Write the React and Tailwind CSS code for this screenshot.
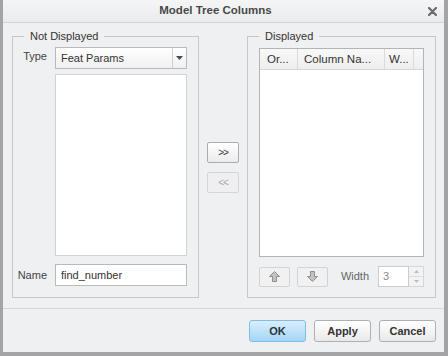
import React from "react";

const font = "font-['Liberation_Sans',Arial,sans-serif]";

function Group({ title, className, children }) {
  return (
    <div className={`relative border border-[#c6c7ca] ${className}`}>
      <span className="absolute -top-[8px] left-[11px] bg-[#eff0f2] px-[6px] text-[11px] leading-[14px] text-[#333]">
        {title}
      </span>
      {children}
    </div>
  );
}

function MoveArrow({ up }) {
  const pts = up
    ? "5.5,0.5 10.5,5.5 7.5,5.5 7.5,10.5 3.5,10.5 3.5,5.5 0.5,5.5"
    : "3.5,0.5 7.5,0.5 7.5,5.5 10.5,5.5 5.5,10.5 0.5,5.5 3.5,5.5";
  return (
    <svg width="11" height="11" viewBox="0 0 11 11">
      <polygon points={pts} fill="#c2c2c2" stroke="#8e8e8e" strokeWidth="1" strokeLinejoin="round" />
    </svg>
  );
}

export default function App() {
  return (
    <div className={`${font} w-[448px] h-[356px] bg-[#eff0f2] border-l-[3px] border-r-[4px] border-b-[4px] border-[#a4a4a6] flex flex-col`}>
      {/* title bar */}
      <div className="h-[23px] flex items-center border-b border-[#d3d4d7] bg-gradient-to-b from-[#f5f5f6] to-[#eaebed]">
        <div className="flex-1 text-center text-[11.5px] font-bold text-[#484848]">Model Tree Columns</div>
        <svg width="9" height="9" viewBox="0 0 9 9" className="mr-[7px]">
          <path d="M1 1 L8 8 M8 1 L1 8" stroke="#6b6b6b" strokeWidth="2.2" strokeLinecap="round" />
        </svg>
      </div>

      {/* body */}
      <div className="h-[285px] flex pl-[9px] pt-[13px]">
        <Group title="Not Displayed" className="w-[187px] h-[262px] pt-[10px]">
          <div className="flex items-start">
            <span className="w-[34px] mt-[2px] text-right text-[11px] leading-[14px] text-[#444]">Type</span>
            <div className="ml-[8px] w-[132px] h-[22px] flex border border-[#b9babd] bg-gradient-to-b from-[#ffffff] to-[#f0f0f1]">
              <span className="flex-1 pl-[5px] text-[11px] leading-[20px] text-[#333]">Feat Params</span>
              <div className="w-[14px] border-l border-[#cfd0d2] flex items-center justify-center">
                <svg width="7" height="4" viewBox="0 0 7 4">
                  <path d="M0 0 H7 L3.5 4 Z" fill="#4a4a4a" />
                </svg>
              </div>
            </div>
          </div>
          <div className="ml-[42px] mt-[5px] w-[132px] h-[182px] bg-white border border-[#d2d3d6]" />
          <div className="mt-[8px] flex items-center">
            <span className="w-[34px] text-right text-[11px] leading-[14px] text-[#444]">Name</span>
            <div className="ml-[8px] w-[132px] h-[22px] bg-white border border-[#b9babd] pl-[5px] text-[11px] leading-[20px] text-[#333]">
              find_number
            </div>
          </div>
        </Group>

        <div className="w-[48px] h-[262px] flex flex-col items-center justify-center gap-[9px]">
          <button className="w-[32px] h-[21px] rounded-[2px] border border-[#acadb0] bg-gradient-to-b from-[#ffffff] to-[#ebebec] text-[10px] leading-[19px] text-[#333] tracking-[-1px]">
            &gt;&gt;
          </button>
          <button className="w-[32px] h-[21px] rounded-[2px] border border-[#d4d5d7] bg-[#efeff1] text-[10px] leading-[19px] text-[#a8a8a8] tracking-[-1px]">
            &lt;&lt;
          </button>
        </div>

        <Group title="Displayed" className="w-[189px] h-[262px] pt-[11px] pl-[11px]">
          <div className="w-[165px] h-[209px] bg-white border border-[#b3b4b7]">
            <div className="h-[21px] flex border-b border-[#d5d6d8] bg-gradient-to-b from-[#f8f8f8] to-[#eeeeef] text-[11.5px] leading-[20px] text-[#333]">
              <span className="w-[38px] pl-[7px] border-r border-[#d9dadc]">Or...</span>
              <span className="w-[87px] pl-[6px] border-r border-[#d9dadc]">Column Na...</span>
              <span className="w-[29px] pl-[4px] border-r border-[#d9dadc]">W...</span>
            </div>
          </div>
          <div className="mt-[9px] w-[165px] flex items-center">
            <button className="w-[31px] h-[20px] rounded-[2px] border border-[#d2d3d5] bg-[#f1f1f2] flex items-center justify-center">
              <MoveArrow up />
            </button>
            <button className="ml-[7px] w-[31px] h-[20px] rounded-[2px] border border-[#d2d3d5] bg-[#f1f1f2] flex items-center justify-center">
              <MoveArrow />
            </button>
            <span className="ml-auto text-[11px] text-[#666]">Width</span>
            <div className="ml-[9px] flex">
              <div className="w-[31px] h-[21px] bg-white border border-[#cbccce] pl-[4px] text-[11px] leading-[19px] text-[#8a8a8a]">3</div>
              <div className="w-[15px] h-[21px] flex flex-col border border-l-0 border-[#d6d7d9]">
                <div className="flex-1 flex items-center justify-center bg-[#f3f3f4] border-b border-[#dcdcde]">
                  <svg width="5" height="3" viewBox="0 0 5 3"><path d="M0 3 H5 L2.5 0 Z" fill="#bdbdbd" /></svg>
                </div>
                <div className="flex-1 flex items-center justify-center bg-[#f3f3f4]">
                  <svg width="5" height="3" viewBox="0 0 5 3"><path d="M0 0 H5 L2.5 3 Z" fill="#bdbdbd" /></svg>
                </div>
              </div>
            </div>
          </div>
        </Group>
      </div>

      {/* footer */}
      <div className="flex-1 border-t border-[#d6d7da] flex justify-end gap-[8px] pt-[11px] pr-[8px]">
        <button className="w-[57px] h-[22px] rounded-[3px] border border-[#7dbfe9] bg-gradient-to-b from-[#d8eefc] to-[#a5d6f7] text-[11px] font-bold text-[#2a3440]">
          OK
        </button>
        <button className="w-[57px] h-[22px] rounded-[3px] border border-[#aeafb2] bg-gradient-to-b from-[#ffffff] to-[#e9e9ea] text-[11px] font-bold text-[#333]">
          Apply
        </button>
        <button className="w-[57px] h-[22px] rounded-[3px] border border-[#aeafb2] bg-gradient-to-b from-[#ffffff] to-[#e9e9ea] text-[11px] font-bold text-[#333]">
          Cancel
        </button>
      </div>
    </div>
  );
}
